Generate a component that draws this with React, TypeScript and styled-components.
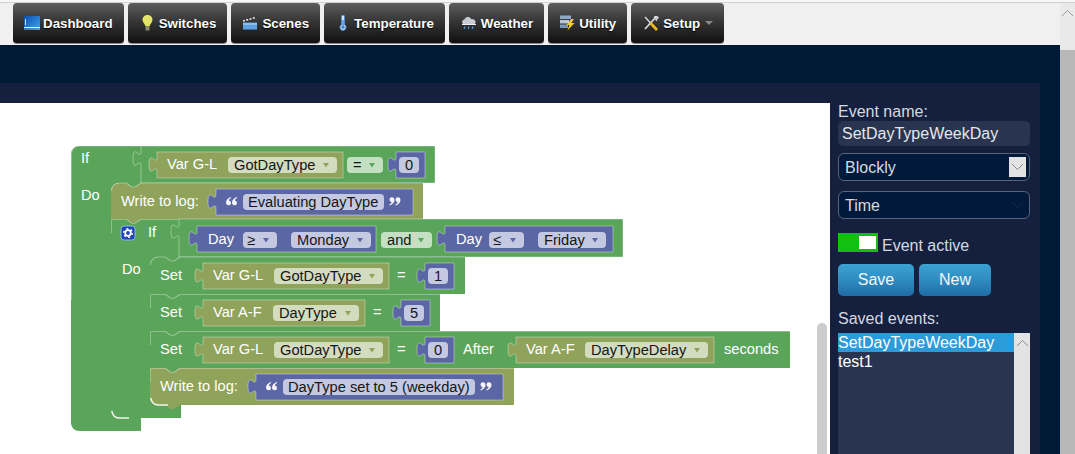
import type { ReactNode } from 'react';
import styled, { createGlobalStyle } from 'styled-components';

const GREEN = '#5ba55b';
const OLIVE = '#8fa35b';
const BLUE = '#5b67a5';
const FIELD: Record<string, string> = {
  [GREEN]: '#c3e0c3',
  [OLIVE]: '#d4dcc0',
  [BLUE]: '#c4c8e0',
};

const GlobalStyle = createGlobalStyle`
  html, body {
    margin: 0;
    height: 100%;
    overflow: hidden;
    font-family: "Liberation Sans", Arial, sans-serif;
  }
`;

const Shell = styled.div`
  display: flex;
  flex-direction: column;
  height: 454px;
  overflow: hidden;
`;
const TopEdge = styled.div`
  height: 2px;
  background: #f7f7f7;
  border-bottom: 1px solid #cfcfcf;
  flex: none;
`;
const Body = styled.div`
  display: flex;
  flex: 1;
  min-height: 0;
`;
const Main = styled.div`
  flex: 1;
  min-width: 0;
  display: flex;
  flex-direction: column;
`;
const PageScroll = styled.div`
  width: 15px;
  flex: none;
  display: flex;
  flex-direction: column;
  background: #e9e9e9;
`;
const ScrollUp = styled.div`
  height: 47px;
  display: flex;
  justify-content: center;
  padding-top: 6px;
  box-sizing: border-box;
`;
const ScrollThumb = styled.div`
  flex: 1;
  background: #b9b8b8;
`;
const Nav = styled.nav`
  height: 42px;
  flex: none;
  display: flex;
  gap: 4px;
  padding-left: 13px;
  background: #f0f0f0;
`;
const NavButton = styled.a`
  height: 41px;
  display: flex;
  align-items: center;
  gap: 3px;
  padding: 0 11px;
  box-sizing: border-box;
  border-radius: 4px;
  background: linear-gradient(#5e5e5e, #3a3a3a 40%, #101010);
  border-bottom: 1px solid #888;
  color: #fff;
  font-size: 13.33px;
  font-weight: bold;
  text-shadow: 0 1px 1px #000;
`;
const Caret = styled.span`
  width: 0;
  height: 0;
  margin-left: 2px;
  border-left: 4px solid transparent;
  border-right: 4px solid transparent;
  border-top: 4px solid #888;
`;
const Band = styled.div`
  height: 38px;
  flex: none;
  background: #001a36;
`;
const Content = styled.div`
  flex: 1;
  min-height: 0;
  padding-right: 20px;
  background: #001a36;
  display: flex;
`;
const Panel = styled.div`
  flex: 1;
  padding-top: 20px;
  background: #14203d;
  display: flex;
  overflow: hidden;
`;
const WorkspaceArea = styled.div`
  position: relative;
  flex: 1;
  background: #fff;
`;
const Canvas = styled.svg`
  display: block;
  width: 830px;
  height: 351px;
`;
const WorkspaceThumb = styled.div`
  position: absolute;
  left: 817px;
  top: 220px;
  width: 10px;
  height: 150px;
  border-radius: 5px;
  background: #ccc;
`;
const Sidebar = styled.aside`
  width: 210px;
  flex: none;
  box-sizing: border-box;
  padding: 0 10px 0 8px;
  display: flex;
  flex-direction: column;
  color: #d5d9e0;
  font-size: 16px;
  line-height: 18px;

  & > * {
    flex: none;
  }
`;
const NameInput = styled.div`
  height: 25px;
  margin-bottom: 7px;
  padding-left: 4px;
  border-radius: 5px;
  background: #293550;
  color: #e4e6ea;
  line-height: 25px;
`;
const EventSelect = styled.div`
  height: 28px;
  box-sizing: border-box;
  margin-bottom: 10px;
  padding: 0 3px 0 6px;
  display: flex;
  align-items: center;
  justify-content: space-between;
  border: 1px solid #566379;
  border-radius: 6px;
  background: #011a3c;
  color: #d5d9e0;
`;
const SelectText = styled.span`
  padding-top: 2px;
`;
const SelectArrow = styled.span<{ $bare?: boolean }>`
  width: 17px;
  height: 20px;
  display: flex;
  align-items: center;
  justify-content: center;
  background: ${p => (p.$bare ? 'transparent' : '#e3e3e3')};
`;
const ActiveRow = styled.div`
  height: 22px;
  margin: 4px 0 9px;
  display: flex;
  align-items: flex-end;
  gap: 4px;
`;
const Toggle = styled.div`
  width: 40px;
  height: 19px;
  align-self: flex-start;
  box-sizing: border-box;
  padding: 3px 2px 3px 0;
  display: flex;
  justify-content: flex-end;
  background: #12c012;
`;
const Knob = styled.div`
  width: 17px;
  height: 13px;
  background: #fff;
`;
const Buttons = styled.div`
  display: flex;
  gap: 5px;
  margin-bottom: 14px;
`;
const ActionButton = styled.button<{ $w: number }>`
  width: ${p => p.$w}px;
  height: 32px;
  border: none;
  border-radius: 5px;
  background: linear-gradient(#3ba2d2, #2f8cc0 50%, #1f6ba6);
  color: #f2f6fa;
  font: 16px "Liberation Sans", Arial, sans-serif;
`;
const ListLabel = styled.div`
  margin-bottom: 5px;
`;
const EventList = styled.div`
  height: 125px;
  display: flex;
  background: #293550;
`;
const ListRows = styled.div`
  flex: 1;
  color: #fff;
  line-height: 19px;
`;
const ListRow = styled.div<{ $active?: boolean }>`
  height: 19px;
  background: ${p => (p.$active ? '#2b9bd9' : 'transparent')};
`;
const ListScroll = styled.div`
  width: 16px;
  display: flex;
  justify-content: center;
  padding-top: 6px;
  box-sizing: border-box;
  background: #e3e3e3;
`;

/* workspace drawing parts */
const Label = styled.text<{ $dark?: boolean }>`
  font: 14.67px "Liberation Sans", Arial, sans-serif;
  fill: ${p => (p.$dark ? '#161616' : '#fff')};
`;
const Shape = styled.path<{ $fill: string }>`
  fill: ${p => p.$fill};
`;
const Edge = styled.path`
  fill: none;
  stroke: rgba(255, 255, 255, 0.3);
  stroke-width: 1;
`;
const ValueShape = styled.path<{ $fill: string }>`
  fill: ${p => p.$fill};
  stroke: rgba(255, 255, 255, 0.35);
  stroke-width: 1;
`;
const Corner = styled.path`
  fill: none;
  stroke: #eef5ea;
  stroke-width: 1.5;
`;
const FieldBox = styled.rect<{ $fill: string }>`
  fill: ${p => p.$fill};
`;
const FieldArrow = styled.path<{ $fill: string }>`
  fill: ${p => p.$fill};
`;

const Chevron = ({ up, color }: { up?: boolean; color: string }) => (
  <svg width="13" height="8" viewBox="0 0 13 8">
    <path d={up ? 'M1 7 6.5 1.5 12 7' : 'M1 1 6.5 6.5 12 1'} fill="none" stroke={color} strokeWidth="1" />
  </svg>
);

/* nav icons */
const DashIcon = () => (
  <svg width="16" height="14" viewBox="0 0 16 14">
    <defs>
      <linearGradient id="dash" x1="0" y1="0" x2="1" y2="1">
        <stop offset="0" stopColor="#0d4fb0" />
        <stop offset="1" stopColor="#3ea6ee" />
      </linearGradient>
    </defs>
    <rect width="16" height="14" fill="url(#dash)" />
    <rect y="11" width="16" height="1" fill="#dff1ff" />
    <rect x="1" y="3" width="1" height="6" fill="#bfe3ff" />
  </svg>
);
const BulbIcon = () => (
  <svg width="17" height="16" viewBox="0 0 17 16">
    <path d="M8.5 0C5.3 0 3.5 2.3 3.5 4.8c0 2.5 2.3 3.800 3 6.700h4c.7-2.900 3-4.200 3-6.700C13.500 2.300 11.700 0 8.500 0Z" fill="#e4e46a" />
    <rect x="6.500" y="12" width="4" height="3.500" fill="#8c8c70" />
  </svg>
);
const SceneIcon = () => (
  <svg width="17" height="14" viewBox="0 0 17 14">
    <path d="M1 6.500h14v7H1Z" fill="#5ea2e6" />
    <path d="M1 5 14 1.500" stroke="#e8e8e8" strokeWidth="1.600" strokeDasharray="2 1.400" />
    <path d="M1 7.500h14v1H1Z" fill="#b8d8f6" />
  </svg>
);
const ThermoIcon = () => (
  <svg width="16" height="16" viewBox="0 0 16 16">
    <path d="M6.600 1.500a1.400 1.400 0 0 1 2.800 0v8.200a3 3 0 1 1-2.800 0Z" fill="#e6f0fa" stroke="#4f92d8" strokeWidth="1" />
    <path d="M8 5v7" stroke="#3f86d6" strokeWidth="1.400" />
    <circle cx="8" cy="12.300" r="1.800" fill="#3f86d6" />
  </svg>
);
const WeatherIcon = () => (
  <svg width="18" height="14" viewBox="0 0 18 14">
    <path d="M4 8.500a2.600 2.600 0 0 1 .4-5.100C5 1.600 6.800.5 8.600 1c1.200.3 2 1 2.400 2 2.400-.3 4.400 1 4.600 3 0 1.500-1 2.500-2.400 2.500Z" fill="#c9ccd2" />
    <path d="M2 8.500h14" stroke="#eef0f3" strokeWidth="1" />
    <path d="M5 10.500 4.200 13M9 10.500 8.200 13M13 10.500 12.200 13" stroke="#4a8fd6" strokeWidth="1.300" />
  </svg>
);
const UtilityIcon = () => (
  <svg width="17" height="16" viewBox="0 0 17 16">
    <rect x="1" y="0.500" width="11" height="3.500" fill="#8fa8c4" />
    <rect x="1" y="5" width="9" height="3.500" fill="#b8c8d8" />
    <rect x="1" y="9.500" width="8" height="3.500" fill="#7d97b4" />
    <path d="M12 4 7.500 10h3L8.500 15.500 15.500 8h-3.200L15 4Z" fill="#f2d21e" />
  </svg>
);
const SetupIcon = () => (
  <svg width="18" height="15" viewBox="0 0 18 15">
    <path d="M14 1 3 13" stroke="#d8d8d8" strokeWidth="1.800" />
    <path d="M12 1.500a2.800 2.800 0 0 1 4 .2l-2 1.800 1 1" fill="none" stroke="#e8e8e8" strokeWidth="1.400" />
    <path d="M3 1 8.500 7" stroke="#e6e6e6" strokeWidth="1.200" />
    <path d="M8.500 7 15 14" stroke="#eebc1a" strokeWidth="2.600" />
  </svg>
);

/* block paths, in page coordinates */
const stmtPath = (x: number, y: number, r: number, b: number, o: { round?: boolean; foot?: boolean } = {}) =>
  `M${x} ${y + (o.round ? 8 : 0)}` +
  (o.round ? 'a8 8 0 0 1 8-8' : '') +
  `H${x + 15}l6 4 3 0 6-4H${r}V${b}` +
  `H${x + 30}l-6 4-3 0-6-4` +
  (o.foot ? `H${x + 8}a8 8 0 0 1-8-8Z` : `H${x}Z`);

const topEdge = (x: number, y: number, r: number, round?: boolean) =>
  `M${x + 0.5} ${y + (round ? 8 : 14)}` +
  (round ? 'a8 8 0 0 1 8-8' : `V${y + 0.5}`) +
  `H${x + 15}l6 4 3 0 6-4H${r}`;

const valuePath = (x: number, y: number, r: number, b: number) =>
  `M${x} ${y}v5c0 10-8-8-8 7.500s8-2.500 8 7.500V${b}H${r}V${y}Z`;

// the slot's inner corners are rounded so a child's round corner sits on the parent's colour
const cPath = (x: number, y: number, rowR: number, rowB: number, slot: number, ftop: number, fr: number, b: number, first: boolean) =>
  (first ? `M${x} ${y + 8}a8 8 0 0 1 8-8H${rowR}` : `M${x} ${y}H${x + 15}l6 4 3 0 6-4H${rowR}`) +
  `V${rowB}H${slot + 30}l-6 4-3 0-6-4H${slot + 8}a8 8 0 0 0-8 8V${ftop - 8}a8 8 0 0 0 8 8H${fr}V${b}` +
  (first ? '' : `H${x + 30}l-6 4-3 0-6-4`) +
  `H${x + 8}a8 8 0 0 1-8-8Z`;

const Field = ({ x, y, w, text, tone, arrow = true, tx = 6 }: { x: number; y: number; w: number; text: string; tone: string; arrow?: boolean; tx?: number }) => (
  <>
    <FieldBox x={x} y={y} width={w} height={16} rx={4} $fill={FIELD[tone]} />
    <Label x={x + tx} y={y + 13} $dark>
      {text}
    </Label>
    {arrow && <FieldArrow d={`M${x + w - 14} ${y + 6}h6l-3 4.500Z`} $fill={tone} />}
  </>
);

const Value = ({ x, y, r, tone, children }: { x: number; y: number; r: number; tone: string; children?: ReactNode }) => (
  <>
    <ValueShape d={valuePath(x, y, r, y + 26)} $fill={tone} />
    {children}
  </>
);

const VarBlock = ({ x, y, r, name, fx, text }: { x: number; y: number; r: number; name: string; fx: number; text: string }) => (
  <Value x={x} y={y} r={r} tone={OLIVE}>
    <Label x={x + 10} y={y + 17}>
      {name}
    </Label>
    <Field x={fx} y={y + 5} w={r - fx - 6} text={text} tone={OLIVE} />
  </Value>
);

const NumBlock = ({ x, y, text }: { x: number; y: number; text: string }) => (
  <Value x={x} y={y} r={x + 29} tone={BLUE}>
    <Field x={x + 3} y={y + 5} w={20} text={text} tone={BLUE} arrow={false} />
  </Value>
);

const Quote = ({ x, y, close }: { x: number; y: number; close?: boolean }) => {
  const mark = 'M4.800 0C2 1 0 3 0 5.800A2.500 2.500 0 1 0 2.900 3.400C3 2.400 3.900 1.500 5.200 .900Z';
  return (
    <g transform={close ? `translate(${x + 11.5} ${y + 8.5}) rotate(180)` : `translate(${x} ${y})`}>
      <path d={mark} fill="#f4f4fa" />
      <path d={mark} transform="translate(6 0)" fill="#f4f4fa" />
    </g>
  );
};

const TextBlock = ({ x, y, r, fx, fr, text }: { x: number; y: number; r: number; fx: number; fr: number; text: string }) => (
  <Value x={x} y={y} r={r} tone={BLUE}>
    <Quote x={fx - 17} y={y + 8} />
    <Field x={fx} y={y + 5} w={fr - fx} text={text} tone={BLUE} arrow={false} tx={5} />
    <Quote x={fr + 5} y={y + 8} close />
  </Value>
);

const DayBlock = ({ x, r, sign, sx, sr, day, dx, dr }: { x: number; r: number; sign: string; sx: number; sr: number; day: string; dx: number; dr: number }) => (
  <Value x={x} y={226} r={r} tone={BLUE}>
    <Label x={x + 11} y={244}>
      Day
    </Label>
    <Field x={sx} y={232} w={sr - sx} text={sign} tone={BLUE} tx={4} />
    <Field x={dx} y={232} w={dr - dx} text={day} tone={BLUE} />
  </Value>
);

const Workspace = () => (
  <Canvas viewBox="0 103 830 351">
    {/* outer if */}
    <Shape d={cPath(71, 146, 141, 183, 111, 418, 141, 431, true)} $fill={GREEN} />
    <Edge d="M71.500 300V154a8 8 0 0 1 8-8H141" />
    <Label x={81} y={163}>If</Label>
    <Label x={81} y={200}>Do</Label>

    <ValueShape d={valuePath(141, 146, 435, 183)} $fill={GREEN} />
    <VarBlock x={157} y={152} r={343} name="Var G-L" fx={228} text="GotDayType" />
    <Field x={347} y={157} w={36} text="=" tone={GREEN} />
    <NumBlock x={396} y={152} text="0" />

    {/* write to log */}
    <Shape d={stmtPath(111, 183, 423, 219, { round: true })} $fill={OLIVE} />
    <Edge d={topEdge(111, 183, 423, true)} />
    <Label x={121} y={206}>Write to log:</Label>
    <TextBlock x={216} y={189} r={413} fx={243} fr={384} text="Evaluating DayType" />

    {/* inner if */}
    <Shape d={cPath(111, 219, 179, 257, 150, 405, 181, 418, false)} $fill={GREEN} />
    <Edge d={topEdge(111, 219, 179)} />
    <Corner d="M112 411a7 7 0 0 0 7 7H129" />
    <rect x="121" y="226" width="14" height="14" rx="3" fill="#1f44b8" stroke="#8fb6e8" />
    <circle cx="128" cy="233" r="2.800" fill="none" stroke="#fff" strokeWidth="1.800" />
    <circle cx="128" cy="233" r="4.300" fill="none" stroke="#fff" strokeWidth="1.400" strokeDasharray="2 2.500" />
    <Label x={148} y={237}>If</Label>
    <Label x={122} y={274}>Do</Label>

    <ValueShape d={valuePath(179, 219, 623, 257)} $fill={GREEN} />
    <DayBlock x={197} r={376} sign="≥" sx={243} sr={277} day="Monday" dx={291} dr={371} />
    <Field x={381} y={232} w={51} text="and" tone={GREEN} />
    <DayBlock x={445} r={613} sign="≤" sx={489} sr={524} day="Friday" dx={538} dr={606} />

    {/* set rows */}
    <Shape d={stmtPath(150, 257, 465, 294, { round: true })} $fill={GREEN} />
    <Edge d={topEdge(150, 257, 465, true)} />
    <Label x={160} y={280}>Set</Label>
    <VarBlock x={203} y={263} r={389} name="Var G-L" fx={274} text="GotDayType" />
    <Label x={397} y={280}>=</Label>
    <NumBlock x={425} y={263} text="1" />

    <Shape d={stmtPath(150, 294, 440, 331)} $fill={GREEN} />
    <Edge d={topEdge(150, 294, 440)} />
    <Label x={160} y={317}>Set</Label>
    <VarBlock x={203} y={300} r={365} name="Var A-F" fx={273} text="DayType" />
    <Label x={373} y={317}>=</Label>
    <NumBlock x={401} y={300} text="5" />

    <Shape d={stmtPath(150, 331, 790, 368)} $fill={GREEN} />
    <Edge d={topEdge(150, 331, 790)} />
    <Label x={160} y={354}>Set</Label>
    <VarBlock x={203} y={337} r={389} name="Var G-L" fx={274} text="GotDayType" />
    <Label x={397} y={354}>=</Label>
    <NumBlock x={425} y={337} text="0" />
    <Label x={463} y={354}>After</Label>
    <VarBlock x={516} y={337} r={714} name="Var A-F" fx={585} text="DayTypeDelay" />
    <Label x={724} y={354}>seconds</Label>

    <Shape d={stmtPath(150, 368, 514, 405, { foot: true })} $fill={OLIVE} />
    <Edge d={topEdge(150, 368, 514)} />
    <Corner d="M151 398a7 7 0 0 0 7 7H168" />
    <Label x={160} y={391}>Write to log:</Label>
    <TextBlock x={256} y={374} r={503} fx={283} fr={475} text="DayType set to 5 (weekday)" />
  </Canvas>
);

const NAV = [
  { label: 'Dashboard', icon: <DashIcon /> },
  { label: 'Switches', icon: <BulbIcon /> },
  { label: 'Scenes', icon: <SceneIcon /> },
  { label: 'Temperature', icon: <ThermoIcon /> },
  { label: 'Weather', icon: <WeatherIcon /> },
  { label: 'Utility', icon: <UtilityIcon /> },
  { label: 'Setup', icon: <SetupIcon />, caret: true },
];

export default function App() {
  return (
    <>
      <GlobalStyle />
      <Shell>
        <TopEdge />
        <Body>
          <Main>
            <Nav>
              {NAV.map(item => (
                <NavButton key={item.label}>
                  {item.icon}
                  {item.label}
                  {item.caret && <Caret />}
                </NavButton>
              ))}
            </Nav>
            <Band />
            <Content>
              <Panel>
                <WorkspaceArea>
                  <Workspace />
                  <WorkspaceThumb />
                </WorkspaceArea>
                <Sidebar>
                  <div>Event name:</div>
                  <NameInput>SetDayTypeWeekDay</NameInput>
                  <EventSelect>
                    <SelectText>Blockly</SelectText>
                    <SelectArrow>
                      <Chevron color="#8a8a8a" />
                    </SelectArrow>
                  </EventSelect>
                  <EventSelect>
                    <SelectText>Time</SelectText>
                    <SelectArrow $bare>
                      <Chevron color="#12294a" />
                    </SelectArrow>
                  </EventSelect>
                  <ActiveRow>
                    <Toggle>
                      <Knob />
                    </Toggle>
                    Event active
                  </ActiveRow>
                  <Buttons>
                    <ActionButton $w={76}>Save</ActionButton>
                    <ActionButton $w={72}>New</ActionButton>
                  </Buttons>
                  <ListLabel>Saved events:</ListLabel>
                  <EventList>
                    <ListRows>
                      <ListRow $active>SetDayTypeWeekDay</ListRow>
                      <ListRow>test1</ListRow>
                    </ListRows>
                    <ListScroll>
                      <Chevron up color="#8a8a8a" />
                    </ListScroll>
                  </EventList>
                </Sidebar>
              </Panel>
            </Content>
          </Main>
          <PageScroll>
            <ScrollUp>
              <Chevron up color="#9a9a9a" />
            </ScrollUp>
            <ScrollThumb />
          </PageScroll>
        </Body>
      </Shell>
    </>
  );
}
